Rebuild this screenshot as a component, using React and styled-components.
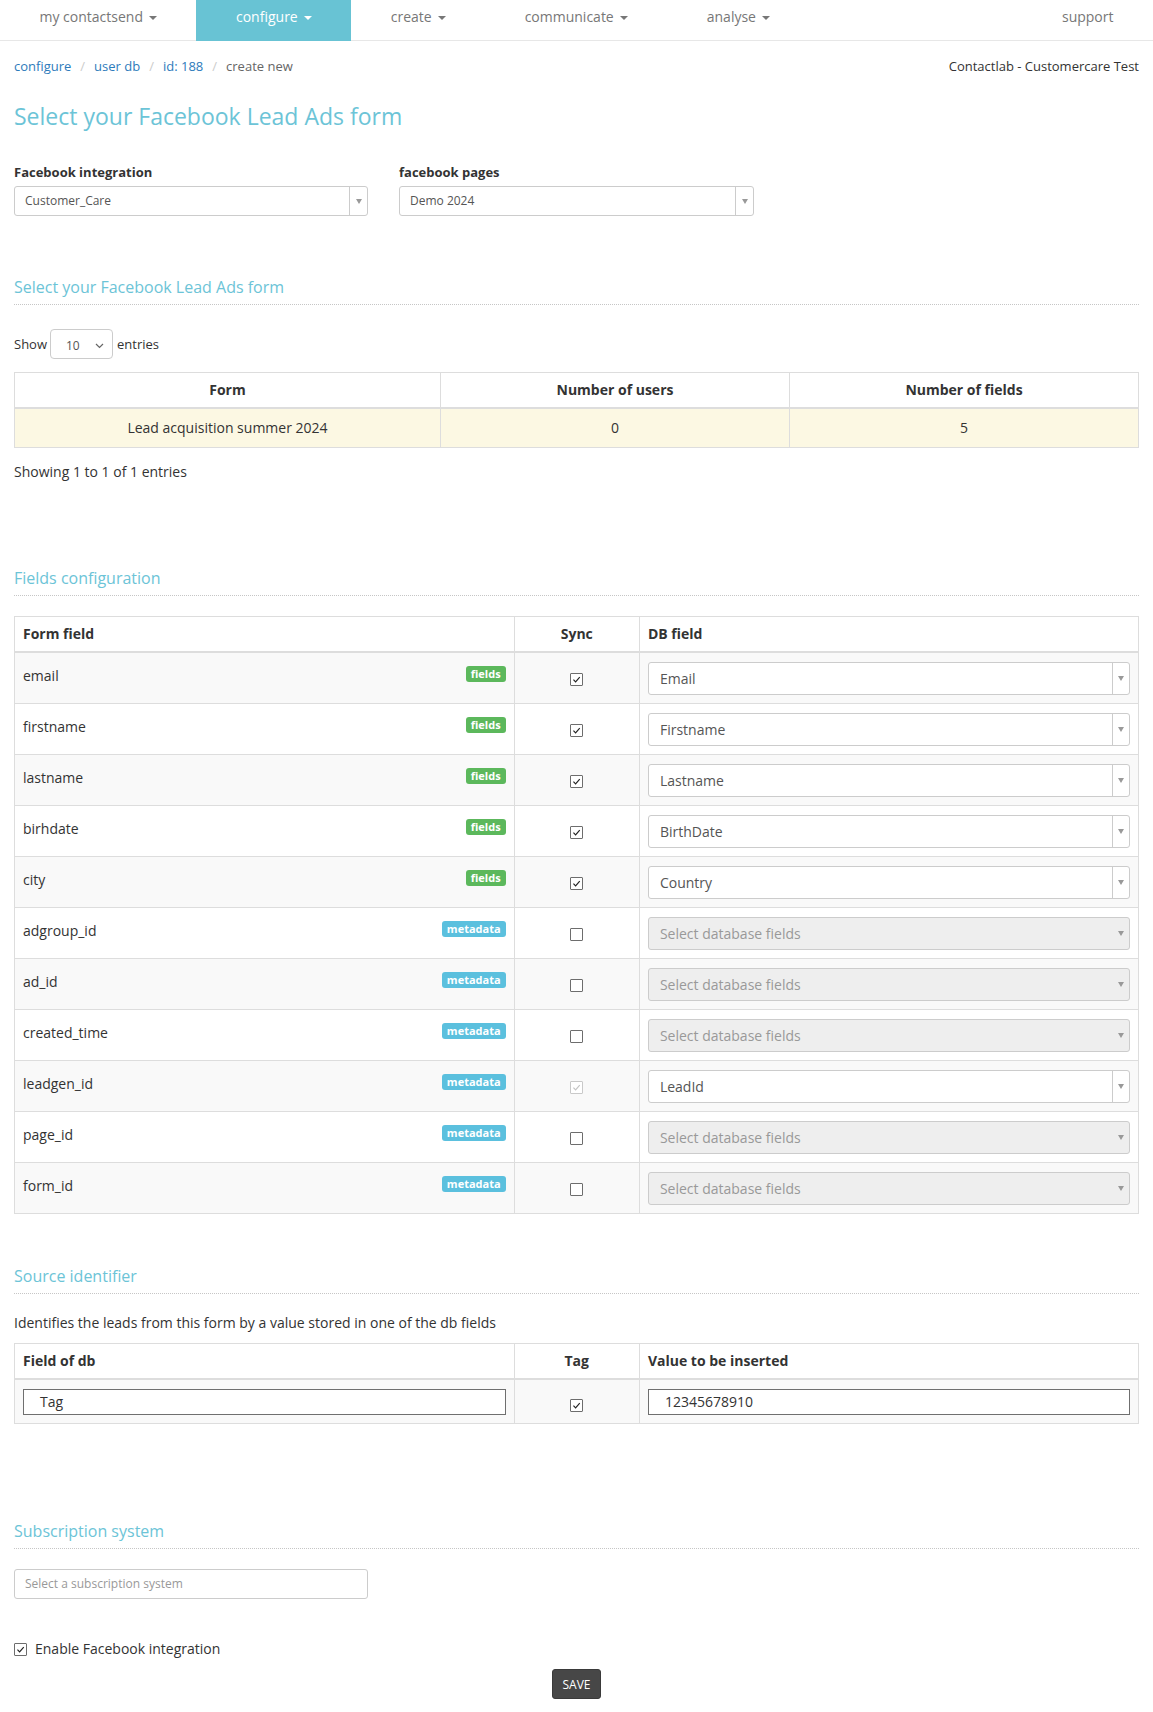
import React from "react";
import styled, { createGlobalStyle } from "styled-components";

const GlobalStyle = createGlobalStyle`
  * { box-sizing: border-box; }
  html, body { margin: 0; padding: 0; background: #fff; }
  body {
    font-family: "Open Sans", "Liberation Sans", sans-serif;
    font-size: 14px;
    line-height: 20px;
    color: #333;
  }
`;

const Nav = styled.nav`
  display: flex;
  height: 41px;
  border-bottom: 1px solid #e7e7e7;
`;

const NavItem = styled.a`
  display: flex;
  align-items: center;
  gap: 6px;
  height: 41px;
  padding: 0 39.5px 7px;
  margin-left: ${(p) => (p.$push ? "auto" : "0")};
  font-size: 14px;
  text-decoration: none;
  color: ${(p) => (p.$active ? "#fff" : "#777")};
  background: ${(p) => (p.$active ? "#68c3d4" : "transparent")};
`;

const Caret = styled.span`
  width: 0;
  height: 0;
  margin-top: 2px;
  border-left: 4px solid transparent;
  border-right: 4px solid transparent;
  border-top: 4px solid currentColor;
`;

const Page = styled.main`
  padding: 0 14px 12px;
`;

const TopBar = styled.div`
  display: flex;
  justify-content: space-between;
  margin-top: 15px;
  font-size: 13px;
  line-height: 20px;
`;

const Crumbs = styled.div`
  display: flex;
`;

const CrumbLink = styled.a`
  color: #2d7bbb;
  text-decoration: none;
`;

const CrumbSep = styled.span`
  color: #ccc;
  padding: 0 9px;
`;

const CrumbCurrent = styled.span`
  color: #666;
`;

const Title = styled.h1`
  margin: 25px 0 0;
  font-size: 23px;
  line-height: 30px;
  font-weight: 400;
  color: #6cc4d7;
`;

const FieldGrid = styled.div`
  display: grid;
  grid-template-columns: 354px 355px;
  column-gap: 31px;
  margin-top: 32px;
`;

const Label = styled.div`
  font-size: 13px;
  line-height: 18px;
  font-weight: 700;
  margin-bottom: 5px;
`;

const SelectBox = styled.div`
  display: flex;
  align-items: center;
  width: ${(p) => p.$w || "100%"};
  height: ${(p) => p.$h}px;
  border: 1px solid #ccc;
  border-radius: 3px;
  background: ${(p) => (p.$disabled ? "#eee" : "#fff")};
  color: ${(p) => (p.$disabled || p.$placeholder ? "#999" : "#555")};
  font-size: ${(p) => p.$fs}px;
`;

const SelectText = styled.span`
  flex: 1;
  padding-left: ${(p) => p.$pl || 10}px;
  white-space: nowrap;
`;

const ArrowBox = styled.span`
  display: flex;
  align-items: center;
  justify-content: center;
  align-self: stretch;
  width: ${(p) => p.$w}px;
  border-left: ${(p) => (p.$divided ? "1px solid #ccc" : "none")};
  &::after {
    content: "";
    border-left: 3px solid transparent;
    border-right: 3px solid transparent;
    border-top: 5px solid #999;
  }
`;

const SectionTitle = styled.h2`
  margin: ${(p) => p.$mt}px 0 0;
  padding-bottom: 6px;
  border-bottom: 1px dotted #c6c6c6;
  font-size: 16px;
  line-height: 22px;
  font-weight: 400;
  color: #6cc4d7;
`;

const ShowRow = styled.div`
  display: flex;
  align-items: center;
  height: 30px;
  margin-top: 24px;
  font-size: 13px;
`;

const LengthSelect = styled.div`
  display: flex;
  align-items: center;
  justify-content: space-between;
  width: 63px;
  height: 30px;
  margin: 0 4px 0 3px;
  padding: 3px 8px 0 15px;
  border: 1px solid #ccc;
  border-radius: 4px;
  font-size: 12px;
  color: #555;
`;

const Table = styled.table`
  width: 100%;
  margin-top: ${(p) => p.$mt}px;
  border-collapse: collapse;
  border: 1px solid #ddd;
  table-layout: fixed;
`;

const Th = styled.th`
  padding: 7px 8px;
  border: 1px solid #ddd;
  border-bottom: 2px solid #ddd;
  font-size: 14px;
  line-height: 20px;
  font-weight: 700;
  text-align: ${(p) => p.$align || "left"};
`;

const Tr = styled.tr`
  background: ${(p) => p.$bg || "transparent"};
  &:nth-child(odd) {
    background: ${(p) => p.$bg || "#f9f9f9"};
  }
`;

const Td = styled.td`
  padding: ${(p) => p.$pad || "9px 8px 8px"};
  border: 1px solid #ddd;
  vertical-align: top;
  text-align: ${(p) => p.$align || "left"};
`;

const FieldCell = styled.div`
  display: flex;
  justify-content: space-between;
  align-items: flex-start;
`;

const FieldName = styled.span`
  padding-top: 4px;
`;

const Badge = styled.span`
  margin-top: 4px;
  height: 16px;
  padding: 0 5px;
  border-radius: 3px;
  background: ${(p) => (p.$kind === "metadata" ? "#5bc0de" : "#5cb85c")};
  color: #fff;
  font-size: 11px;
  line-height: 16px;
  font-weight: 700;
`;

const Box = styled.span`
  display: inline-flex;
  align-items: center;
  justify-content: center;
  width: 13px;
  height: 13px;
  margin-top: ${(p) => p.$mt || 0}px;
  border: 1px solid ${(p) => (p.$disabled ? "#c9c9c9" : "#6d6d6d")};
  border-radius: 1px;
  background: #fff;
  vertical-align: top;
`;

const Info = styled.div`
  margin-top: ${(p) => p.$mt}px;
  font-size: 14px;
  line-height: 20px;
`;

const TextInput = styled.div`
  height: 26px;
  padding-left: 16px;
  border: 1px solid #6f6f6f;
  background: #fff;
  font-size: 14px;
  line-height: 24px;
  color: #333;
`;

const SubscriptionWrap = styled.div`
  margin-top: 20px;
`;

const EnableRow = styled.label`
  display: flex;
  align-items: center;
  gap: 8px;
  margin-top: 40px;
  font-size: 14px;
  line-height: 20px;
`;

const SaveButton = styled.button`
  display: block;
  width: 49px;
  height: 30px;
  margin: 10px auto 0;
  padding: 0;
  border: 1px solid #3a3a3a;
  border-radius: 3px;
  background: #474747;
  color: #fff;
  font-family: inherit;
  font-size: 12px;
`;

function Checkbox({ checked, disabled, mt }) {
  return (
    <Box $disabled={disabled} $mt={mt}>
      {checked && (
        <svg width="9" height="9" viewBox="0 0 10 10">
          <path
            d="M1.6 5.2 L4 7.6 L8.6 2.4"
            fill="none"
            stroke={disabled ? "#c4c4c4" : "#222"}
            strokeWidth="1.3"
          />
        </svg>
      )}
    </Box>
  );
}

function Select({ value, placeholder, h, fs, w, arrowW, divided, disabled, pl }) {
  return (
    <SelectBox $h={h} $fs={fs} $w={w} $disabled={disabled} $placeholder={!value}>
      <SelectText $pl={pl}>{value || placeholder}</SelectText>
      {arrowW ? <ArrowBox $w={arrowW} $divided={divided} /> : null}
    </SelectBox>
  );
}

const navItems = ["my contactsend", "configure", "create", "communicate", "analyse"];

const fieldRows = [
  { name: "email", kind: "fields", sync: true, db: "Email" },
  { name: "firstname", kind: "fields", sync: true, db: "Firstname" },
  { name: "lastname", kind: "fields", sync: true, db: "Lastname" },
  { name: "birhdate", kind: "fields", sync: true, db: "BirthDate" },
  { name: "city", kind: "fields", sync: true, db: "Country" },
  { name: "adgroup_id", kind: "metadata", sync: false },
  { name: "ad_id", kind: "metadata", sync: false },
  { name: "created_time", kind: "metadata", sync: false },
  { name: "leadgen_id", kind: "metadata", sync: true, locked: true, db: "LeadId" },
  { name: "page_id", kind: "metadata", sync: false },
  { name: "form_id", kind: "metadata", sync: false },
];

export default function App() {
  return (
    <>
      <GlobalStyle />
      <Nav>
        {navItems.map((item) => (
          <NavItem key={item} $active={item === "configure"}>
            {item}
            <Caret />
          </NavItem>
        ))}
        <NavItem $push>support</NavItem>
      </Nav>

      <Page>
        <TopBar>
          <Crumbs>
            <CrumbLink>configure</CrumbLink>
            <CrumbSep>/</CrumbSep>
            <CrumbLink>user db</CrumbLink>
            <CrumbSep>/</CrumbSep>
            <CrumbLink>id: 188</CrumbLink>
            <CrumbSep>/</CrumbSep>
            <CrumbCurrent>create new</CrumbCurrent>
          </Crumbs>
          <span>Contactlab - Customercare Test</span>
        </TopBar>

        <Title>Select your Facebook Lead Ads form</Title>

        <FieldGrid>
          <div>
            <Label>Facebook integration</Label>
            <Select value="Customer_Care" h={30} fs={12} arrowW={18} divided />
          </div>
          <div>
            <Label>facebook pages</Label>
            <Select value="Demo 2024" h={30} fs={12} arrowW={18} divided />
          </div>
        </FieldGrid>

        <SectionTitle $mt={60}>Select your Facebook Lead Ads form</SectionTitle>

        <ShowRow>
          Show
          <LengthSelect>
            10
            <svg width="9" height="6" viewBox="0 0 9 6">
              <path d="M1 1 L4.5 4.5 L8 1" fill="none" stroke="#666" strokeWidth="1.2" />
            </svg>
          </LengthSelect>
          entries
        </ShowRow>

        <Table $mt={13}>
          <colgroup>
            <col style={{ width: "37.9%" }} />
            <col style={{ width: "31.05%" }} />
            <col />
          </colgroup>
          <thead>
            <tr>
              <Th $align="center">Form</Th>
              <Th $align="center">Number of users</Th>
              <Th $align="center">Number of fields</Th>
            </tr>
          </thead>
          <tbody>
            <Tr $bg="#fcf8e3">
              <Td $align="center" $pad="9px 8px">Lead acquisition summer 2024</Td>
              <Td $align="center" $pad="9px 8px">0</Td>
              <Td $align="center" $pad="9px 8px">5</Td>
            </Tr>
          </tbody>
        </Table>

        <Info $mt={14}>Showing 1 to 1 of 1 entries</Info>

        <SectionTitle $mt={85}>Fields configuration</SectionTitle>

        <Table $mt={20}>
          <colgroup>
            <col style={{ width: "44.45%" }} />
            <col style={{ width: "11.15%" }} />
            <col />
          </colgroup>
          <thead>
            <tr>
              <Th>Form field</Th>
              <Th $align="center">Sync</Th>
              <Th>DB field</Th>
            </tr>
          </thead>
          <tbody>
            {fieldRows.map((r) => (
              <Tr key={r.name}>
                <Td>
                  <FieldCell>
                    <FieldName>{r.name}</FieldName>
                    <Badge $kind={r.kind}>{r.kind}</Badge>
                  </FieldCell>
                </Td>
                <Td $align="center">
                  <Checkbox checked={r.sync} disabled={r.locked} mt={11} />
                </Td>
                <Td>
                  {r.db ? (
                    <Select value={r.db} h={33} fs={14} arrowW={17} pl={11} divided />
                  ) : (
                    <Select placeholder="Select database fields" h={33} fs={14} arrowW={17} pl={11} disabled />
                  )}
                </Td>
              </Tr>
            ))}
          </tbody>
        </Table>

        <SectionTitle $mt={51}>Source identifier</SectionTitle>

        <Info $mt={19}>Identifies the leads from this form by a value stored in one of the db fields</Info>

        <Table $mt={10}>
          <colgroup>
            <col style={{ width: "44.45%" }} />
            <col style={{ width: "11.15%" }} />
            <col />
          </colgroup>
          <thead>
            <tr>
              <Th>Field of db</Th>
              <Th $align="center">Tag</Th>
              <Th>Value to be inserted</Th>
            </tr>
          </thead>
          <tbody>
            <Tr>
              <Td>
                <TextInput>Tag</TextInput>
              </Td>
              <Td $align="center">
                <Checkbox checked mt={10} />
              </Td>
              <Td>
                <TextInput>12345678910</TextInput>
              </Td>
            </Tr>
          </tbody>
        </Table>

        <SectionTitle $mt={96}>Subscription system</SectionTitle>

        <SubscriptionWrap>
          <Select placeholder="Select a subscription system" h={30} fs={12} w="354px" />
        </SubscriptionWrap>

        <EnableRow>
          <Checkbox checked />
          Enable Facebook integration
        </EnableRow>

        <SaveButton>SAVE</SaveButton>
      </Page>
    </>
  );
}
